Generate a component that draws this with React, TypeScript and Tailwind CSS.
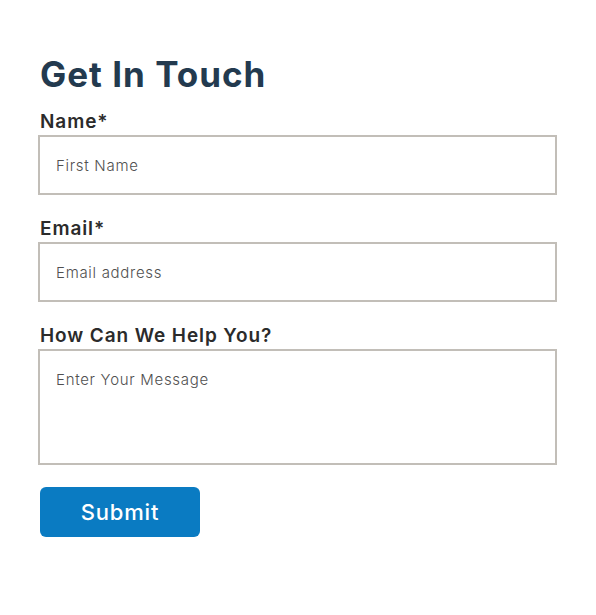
import React from "react";

export default function App() {
  const font = { fontFamily: "Inter, 'Noto Sans', sans-serif" };
  const labelCls = "ml-[2px] text-[19px] leading-[24px] font-semibold text-[#2b2b2b] tracking-[0.9px]";
  const fieldCls =
    "mt-[1px] w-full border-2 border-[#c2beb8] px-[16px] text-[15px] font-light tracking-[0.7px] text-[#444] placeholder:text-[#505050] outline-none";
  return (
    <div className="w-[596px] h-[615px] bg-white pt-[52px] pl-[38px] pr-[39px]" style={font}>
      <h1 className="ml-[2px] text-[35px] leading-[44px] font-bold text-[#233a4f] tracking-[1px]">
        Get In Touch
      </h1>
      <form className="mt-[14px] flex flex-col" onSubmit={(e) => e.preventDefault()}>
        <label className={labelCls}>Name*</label>
        <input className={`${fieldCls} h-[60px]`} placeholder="First Name" />
        <label className={`mt-[22px] ${labelCls}`}>Email*</label>
        <input className={`${fieldCls} h-[60px]`} placeholder="Email address" />
        <label className={`mt-[22px] ${labelCls}`}>How Can We Help You?</label>
        <textarea
          className={`${fieldCls} h-[116px] resize-none pt-[18px] leading-[22px]`}
          placeholder="Enter Your Message"
        />
        <button
          type="submit"
          className="mt-[22px] ml-[2px] h-[50px] w-[160px] rounded-[6px] bg-[#0a7bc2] text-[22px] font-medium tracking-[0.8px] text-white"
        >
          Submit
        </button>
      </form>
    </div>
  );
}
